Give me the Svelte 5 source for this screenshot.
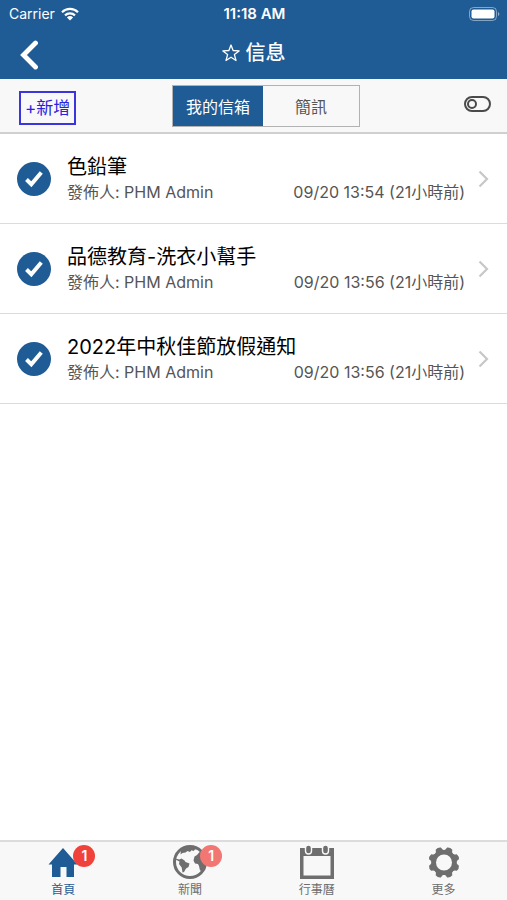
<script lang="ts">
  interface Message {
    id: number;
    title: string;
    author: string;
    time: string;
    ago: string;
  }

  interface Tab {
    id: string;
    label: string;
    badge?: number;
  }

  const messages: Message[] = [
    { id: 1, title: '色鉛筆', author: 'PHM Admin', time: '09/20 13:54', ago: '21小時前' },
    { id: 2, title: '品德教育-洗衣小幫手', author: 'PHM Admin', time: '09/20 13:56', ago: '21小時前' },
    { id: 3, title: '2022年中秋佳節放假通知', author: 'PHM Admin', time: '09/20 13:56', ago: '21小時前' },
  ];

  const boxes = ['我的信箱', '簡訊'];

  const tabs: Tab[] = [
    { id: 'home', label: '首頁', badge: 1 },
    { id: 'news', label: '新聞', badge: 1 },
    { id: 'calendar', label: '行事曆' },
    { id: 'more', label: '更多' },
  ];

  // Angles of the gear's eight teeth.
  const teeth = [22.5, 67.5, 112.5, 157.5, 202.5, 247.5, 292.5, 337.5];

  let activeBox = $state(boxes[0]);
  let activeTab = $state('home');
  let selecting = $state(false);
</script>

<svelte:head>
  <title>信息</title>
</svelte:head>

<div class="app">
  <header>
    <div class="status">
      <span class="carrier">
        Carrier
        <svg width="18" height="14" viewBox="0 0 18 14" aria-hidden="true">
          <g fill="none" stroke="#fff" stroke-width="2.2">
            <path d="M1 5.2a11.5 11.5 0 0 1 16 0" />
            <path d="M4 8.4a7.2 7.2 0 0 1 10 0" />
          </g>
          <path d="M9 13.6L5.9 10.4a4.5 4.5 0 0 1 6.2 0z" fill="#fff" />
        </svg>
      </span>
      <span class="clock">11:18 AM</span>
      <svg class="battery" width="31" height="14" viewBox="0 0 31 14" aria-hidden="true">
        <rect x="0.5" y="0.5" width="27" height="13" rx="4" fill="none" stroke="#fff" stroke-opacity=".45" />
        <rect x="2.5" y="2.5" width="23" height="9" rx="2" fill="#fff" />
        <path d="M29 5v4c1.8-.6 1.8-3.4 0-4z" fill="#fff" fill-opacity=".5" />
      </svg>
    </div>
    <div class="nav">
      <button type="button" class="back" aria-label="返回">
        <svg width="18" height="30" viewBox="0 0 18 30" aria-hidden="true">
          <path d="M15.5 3L3.500 15l12 12" fill="none" stroke="#fff" stroke-width="4.8" stroke-linecap="round" />
        </svg>
      </button>
      <h1>
        <svg width="18" height="18" viewBox="0 0 18 18" aria-hidden="true">
          <path
            d="M9 1l2.1 5.500 6 .4-4.700 3.700 1.600 5.900L9 13.200 4 16.500l1.600-5.900L.9 6.900l6-.4z"
            fill="none" stroke="#fff" stroke-width="1.3" stroke-linejoin="round"
          />
        </svg>
        信息
      </h1>
    </div>
  </header>

  <div class="toolbar">
    <button type="button" class="add">+新增</button>
    <div class="segments">
      {#each boxes as box (box)}
        <button
          type="button"
          class:active={box === activeBox}
          aria-pressed={box === activeBox}
          onclick={() => (activeBox = box)}
        >{box}</button>
      {/each}
    </div>
    <input type="checkbox" class="switch" aria-label="切換" bind:checked={selecting} />
  </div>

  <main>
    <ul>
      {#each messages as m (m.id)}
        <li>
          <a href="#message-{m.id}">
            <svg class="check" width="34" height="34" viewBox="0 0 34 34" aria-hidden="true">
              <circle cx="17" cy="17" r="17" fill="#1f5b94" />
              <path d="M9.500 17.500l4.800 4.700L24.300 10.500" fill="none" stroke="#fff" stroke-width="4" />
            </svg>
            <div class="body">
              <h2>{m.title}</h2>
              <p>
                <span>發佈人: {m.author}</span>
                <span>{m.time} ({m.ago})</span>
              </p>
            </div>
            <svg class="chevron" width="11" height="18" viewBox="0 0 11 18" aria-hidden="true">
              <path d="M1.500 1.500L9 9l-7.500 7.500" fill="none" stroke="#c7c7c7" stroke-width="2.2" />
            </svg>
          </a>
        </li>
      {/each}
    </ul>
  </main>

  <nav class="tabs">
    {#each tabs as tab (tab.id)}
      <button type="button" class:active={tab.id === activeTab} onclick={() => (activeTab = tab.id)}>
        <span class="icon">
          <svg width="36" height="36" viewBox="0 0 36 36" fill="currentColor" aria-hidden="true">
            {#if tab.id === 'home'}
              <path d="M18 4L32.500 20.500H29V33H21.500V23h-6V33H7V20.500H3.500z" />
            {:else if tab.id === 'news'}
              <circle cx="18" cy="18" r="15.500" fill="none" stroke="currentColor" stroke-width="3" />
              <path d="M9 6l5-3.500 10 .5 2 2-3 .500-1.500 1.500-2-.8-1.500 1.800-2.500-1-2 1.500-3 .5-2 1.500z" />
              <path d="M3 14.500l4.500 1 2-1 3 2 1 1.500 4 1.500-1 3.500-2.500 1.500-2 3.500-1.500.5-.8-5-2.700-3.500.5-2.500-3-1.500z" />
              <path d="M25 11l2.500-3 4 1 2.500 6-.5 7-3 5-2.500-.5-1-4.500-1-2-3-.5-1.500-3 1-4z" />
            {:else if tab.id === 'calendar'}
              <path fill-rule="evenodd" d="M1 4h34v31H1zM4.500 12v19.500h27V12z" />
              <g stroke="#f8f8f8" stroke-width="1.4">
                <rect x="6.500" y="1" width="6" height="9" rx="3" />
                <rect x="23.500" y="1" width="6" height="9" rx="3" />
              </g>
            {:else}
              <g transform="translate(18 18.500)">
                <circle r="10.300" fill="none" stroke="currentColor" stroke-width="4.600" />
                {#each teeth as angle (angle)}
                  <path d="M-5-11Q-3-12.500-2.800-15Q0-16.500 2.800-15Q3-12.500 5-11z" transform="rotate({angle})" />
                {/each}
              </g>
            {/if}
          </svg>
          {#if tab.badge}
            <span class="badge">{tab.badge}</span>
          {/if}
        </span>
        <span class="label">{tab.label}</span>
      </button>
    {/each}
  </nav>
</div>

<style>
  :global(body) {
    background: #fff;
  }

  .app {
    display: flex;
    flex-direction: column;
    min-height: 100vh;
    font-family: Inter, 'Noto Sans CJK TC', sans-serif;
    color: #000;
  }
  button {
    margin: 0;
    padding: 0;
    border: 0;
    background: none;
    font: inherit;
    cursor: pointer;
  }
  svg { display: block; }

  /* Header */
  header {
    background: #1f5b94;
    color: #fff;
  }
  .status {
    display: grid;
    grid-template-columns: 1fr auto 1fr;
    align-items: center;
    height: 27px;
    padding: 0 7px 0 9px;
    font-size: 14px;
  }
  .carrier {
    display: flex;
    align-items: center;
    gap: 6px;
  }
  .clock {
    font-size: 15px;
    font-weight: 600;
  }
  .battery { justify-self: end; }
  .nav {
    display: grid;
    grid-template-columns: 1fr auto 1fr;
    align-items: center;
    height: 52px;
    padding: 0 20px;
  }
  .back {
    justify-self: start;
    padding-top: 4px;
  }
  h1 {
    display: flex;
    align-items: center;
    gap: 6px;
    margin: 0;
    font-size: 20px;
    line-height: 28px;
    font-weight: 500;
  }

  /* Toolbar */
  .toolbar {
    display: flex;
    align-items: center;
    justify-content: space-between;
    height: 53px;
    padding: 0 16px 0 19px;
    border-bottom: 2px solid #d0d0d0;
    background: #f8f8f8;
  }
  .add {
    height: 34px;
    margin-top: 4px;
    padding: 0 4px;
    border: 2px solid #3a35dc;
    color: #2a22dd;
    font-size: 17px;
    line-height: 30px;
  }
  .segments {
    display: flex;
    border: 1px solid #b2b2b2;
  }
  .segments button {
    width: 96px;
    height: 40px;
    color: #555;
    font-size: 16px;
  }
  .segments button.active {
    width: 90px;
    background: #1f5b94;
    color: #fff;
  }
  .switch {
    appearance: none;
    display: flex;
    align-items: center;
    box-sizing: border-box;
    width: 27px;
    height: 16px;
    margin: 0 0 4px 8px;
    padding: 0 1px;
    border: 2px solid #4a4a4a;
    border-radius: 8px;
  }
  .switch::before {
    content: '';
    box-sizing: border-box;
    width: 10px;
    height: 10px;
    border: 2px solid #4a4a4a;
    border-radius: 50%;
  }
  .switch:checked { justify-content: flex-end; }

  /* Messages */
  main { flex: 1; }
  ul {
    margin: 0;
    padding: 0;
    list-style: none;
  }
  li { border-bottom: 1px solid #dcdcdc; }
  li a {
    display: flex;
    align-items: center;
    height: 89px;
    padding: 0 18px 0 17px;
    color: inherit;
    text-decoration: none;
  }
  .check { flex-shrink: 0; }
  .body {
    flex: 1;
    min-width: 0;
    margin: 0 13px 0 16px;
    padding-bottom: 2px;
  }
  h2 {
    margin: 0;
    font-size: 20px;
    line-height: 28px;
    font-weight: 400;
  }
  .body p {
    display: flex;
    justify-content: space-between;
    margin: 0;
    color: #555;
    font-size: 16px;
    line-height: 22px;
    white-space: nowrap;
  }
  .chevron { flex-shrink: 0; }

  /* Bottom tabs */
  .tabs {
    display: grid;
    grid-template-columns: repeat(4, 1fr);
    border-top: 2px solid #dcdcdc;
    background: #f8f8f8;
  }
  .tabs button {
    display: flex;
    flex-direction: column;
    align-items: center;
    height: 58px;
    padding-top: 2px;
    color: #6e6e6e;
  }
  .tabs button.active { color: #1f5b94; }
  .icon { position: relative; }
  .label {
    font-size: 12px;
    line-height: 20px;
  }
  .badge {
    position: absolute;
    top: 1px;
    left: 28px;
    width: 22px;
    height: 22px;
    border-radius: 50%;
    background: #f27672;
    color: #fff;
    font-size: 14px;
    line-height: 22px;
    font-weight: 600;
  }
  .active .badge { background: #f0423a; }
</style>
